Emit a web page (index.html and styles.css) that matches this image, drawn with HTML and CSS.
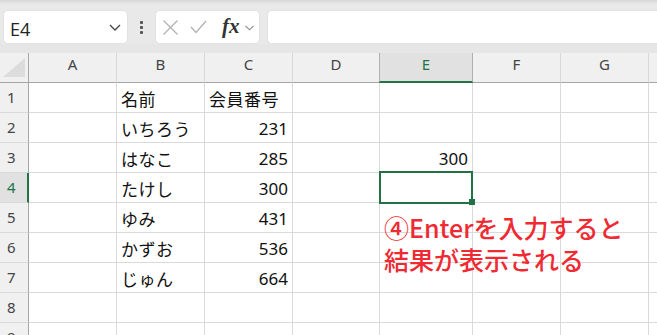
FILE: index.html
```html
<!DOCTYPE html>
<html lang="ja">
<head>
<meta charset="utf-8">
<title>Excel</title>
<link rel="stylesheet" href="styles.css">
</head>
<body>
<div class="topbar">
  <div class="namebox">
    <span class="namebox-text">E4</span>
    <svg class="chev" width="12" height="7" viewBox="0 0 12 7"><polyline points="1,1 6,6 11,1" fill="none" stroke="#444" stroke-width="1.3"/></svg>
  </div>
  <div class="dots"><span></span><span></span><span></span></div>
  <div class="fxbox">
    <svg class="ico-x" width="17" height="15" viewBox="0 0 17 15"><path d="M1.5 0.5 L15.5 14.5 M15.5 0.5 L1.5 14.5" stroke="#b4b4b4" stroke-width="1.4" fill="none"/></svg>
    <svg class="ico-check" width="17" height="14" viewBox="0 0 17 14"><polyline points="1,7 6,12.5 16,1" fill="none" stroke="#b4b4b4" stroke-width="1.4"/></svg>
    <span class="fx">fx</span>
    <svg class="chev-small" width="9" height="6" viewBox="0 0 9 6"><polyline points="0.5,0.8 4.5,4.8 8.5,0.8" fill="none" stroke="#888" stroke-width="1.1"/></svg>
  </div>
  <div class="formula"></div>
</div>
<div class="band"></div>
<div class="sheet">
  <div class="grid">
    <div class="corner"><div class="tri"></div></div>
    <div class="ch">A</div><div class="ch">B</div><div class="ch">C</div><div class="ch">D</div><div class="ch sel">E</div><div class="ch">F</div><div class="ch">G</div><div class="ch"></div>

    <div class="rh">1</div><div class="c"></div><div class="c">名前</div><div class="c">会員番号</div><div class="c"></div><div class="c"></div><div class="c"></div><div class="c"></div><div class="c"></div>
    <div class="rh">2</div><div class="c"></div><div class="c">いちろう</div><div class="c num">231</div><div class="c"></div><div class="c"></div><div class="c"></div><div class="c"></div><div class="c"></div>
    <div class="rh">3</div><div class="c"></div><div class="c">はなこ</div><div class="c num">285</div><div class="c"></div><div class="c num">300</div><div class="c"></div><div class="c"></div><div class="c"></div>
    <div class="rh sel">4</div><div class="c"></div><div class="c">たけし</div><div class="c num">300</div><div class="c"></div><div class="c"></div><div class="c"></div><div class="c"></div><div class="c"></div>
    <div class="rh">5</div><div class="c"></div><div class="c">ゆみ</div><div class="c num">431</div><div class="c"></div><div class="c"></div><div class="c"></div><div class="c"></div><div class="c"></div>
    <div class="rh">6</div><div class="c"></div><div class="c">かずお</div><div class="c num">536</div><div class="c"></div><div class="c"></div><div class="c"></div><div class="c"></div><div class="c"></div>
    <div class="rh">7</div><div class="c"></div><div class="c">じゅん</div><div class="c num">664</div><div class="c"></div><div class="c"></div><div class="c"></div><div class="c"></div><div class="c"></div>
    <div class="rh">8</div><div class="c"></div><div class="c"></div><div class="c"></div><div class="c"></div><div class="c"></div><div class="c"></div><div class="c"></div><div class="c"></div>
    <div class="rh">9</div><div class="c"></div><div class="c"></div><div class="c"></div><div class="c"></div><div class="c"></div><div class="c"></div><div class="c"></div><div class="c"></div>
  </div>
  <div class="selection"></div>
  <div class="handle"></div>
  <div class="note">④Enterを入力すると<br>結果が表示される</div>
</div>
</body>
</html>
```
FILE: styles.css
```css
html, body {
  margin: 0;
  padding: 0;
  background: #ffffff;
  overflow: hidden;
  width: 657px;
  height: 335px;
}
body {
  font-family: "Noto Sans", "Noto Sans CJK JP", sans-serif;
}
.topbar {
  height: 44px;
  box-sizing: border-box;
  padding-top: 10px;
  display: flex;
  align-items: stretch;
  background: linear-gradient(#d6d6d6 0, #e9e9e9 4px, #e9e9e9 100%);
}
.namebox {
  margin-left: 3px;
  width: 125px;
  height: 34px;
  box-sizing: border-box;
  background: #fff;
  border-radius: 5px;
  border: 1px solid #e2e2e2;
  display: flex;
  align-items: center;
  justify-content: space-between;
  padding: 0 6px 0 6px;
}
.namebox-text {
  font-family: "Open Sans", "Noto Sans", sans-serif;
  font-size: 18px;
  color: #222;
  padding-top: 3px;
}
.chev { margin-top: 1px; }
.dots {
  width: 27px;
  display: flex;
  flex-direction: column;
  align-items: center;
  justify-content: center;
  gap: 2px;
}
.dots span {
  width: 3px;
  height: 3px;
  background: #555;
  border-radius: 1px;
}
.fxbox {
  width: 105px;
  height: 34px;
  box-sizing: border-box;
  background: #fff;
  border-radius: 5px;
  border: 1px solid #e2e2e2;
  display: flex;
  align-items: center;
  padding-left: 6px;
}
.ico-x { margin-right: 11px; }
.ico-check { margin-right: 15px; }
.fx {
  font-family: "Liberation Serif", "DejaVu Serif", serif;
  font-style: italic;
  font-weight: bold;
  font-size: 21px;
  color: #333;
  line-height: 1;
  margin-right: 5px;
  margin-top: -2px;
}
.chev-small { margin-top: 2px; }
.formula {
  margin-left: 7px;
  flex: 1;
  height: 34px;
  box-sizing: border-box;
  background: #fff;
  border-radius: 5px 0 0 5px;
  border: 1px solid #e2e2e2;
  border-right: none;
}
.band {
  height: 9px;
  background: #e6e6e6;
}
.sheet {
  position: relative;
}
.grid {
  display: grid;
  grid-template-columns: 29px 88px 88px 88px 87px 93px 88px 88px 1fr;
  grid-auto-rows: 30px;
}
.grid > div {
  box-sizing: border-box;
  border-right: 1px solid #dadada;
  border-bottom: 1px solid #dadada;
}
.corner {
  background: #f0f0f0;
  position: relative;
  border-right-color: #a6a6a6 !important;
  border-bottom-color: #a6a6a6 !important;
}
.tri {
  position: absolute;
  left: 3px;
  top: 5px;
  width: 0;
  height: 0;
  border-left: 22px solid transparent;
  border-bottom: 19px solid #dcdcdc;
}
.ch {
  background: #f0f0f0;
  border-right-color: #d9d9d9 !important;
  border-bottom-color: #a6a6a6 !important;
  text-align: center;
  font-size: 15px;
  line-height: 20px;
  padding-top: 1px;
  color: #444;
}
.ch.sel {
  background: #e1e1e1;
  color: #217346;
  border-right-color: #b0b0b0 !important;
  border-left: 1px solid #b0b0b0;
  margin-left: -1px;
  border-bottom: 2px solid #217346 !important;
}
.rh {
  background: #f0f0f0;
  border-right-color: #a6a6a6 !important;
  border-bottom-color: #d9d9d9 !important;
  font-size: 15px;
  line-height: 29px;
  padding-left: 7px;
  color: #444;
}
.rh.sel {
  background: #e1e1e1;
  color: #217346;
  border-right: 2px solid #217346 !important;
}
.c {
  font-family: "Noto Sans CJK JP", sans-serif;
  font-size: 17px;
  line-height: 29px;
  padding: 1px 4px 0 4px;
  color: #111;
  letter-spacing: 0.5px;
  white-space: nowrap;
  overflow: hidden;
}
.c.num {
  text-align: right;
  letter-spacing: 0;
  font-family: "Noto Sans", sans-serif;
}
.selection {
  position: absolute;
  left: 379px;
  top: 118px;
  width: 94px;
  height: 33px;
  box-sizing: border-box;
  border: 2px solid #217346;
}
.handle {
  position: absolute;
  left: 469px;
  top: 146px;
  width: 6px;
  height: 6px;
  background: #217346;
}
.note {
  position: absolute;
  left: 384px;
  top: 158px;
  font-family: "Noto Sans CJK JP", sans-serif;
  font-weight: 500;
  font-size: 25px;
  line-height: 32px;
  color: #ef2a33;
  white-space: nowrap;
}
```
